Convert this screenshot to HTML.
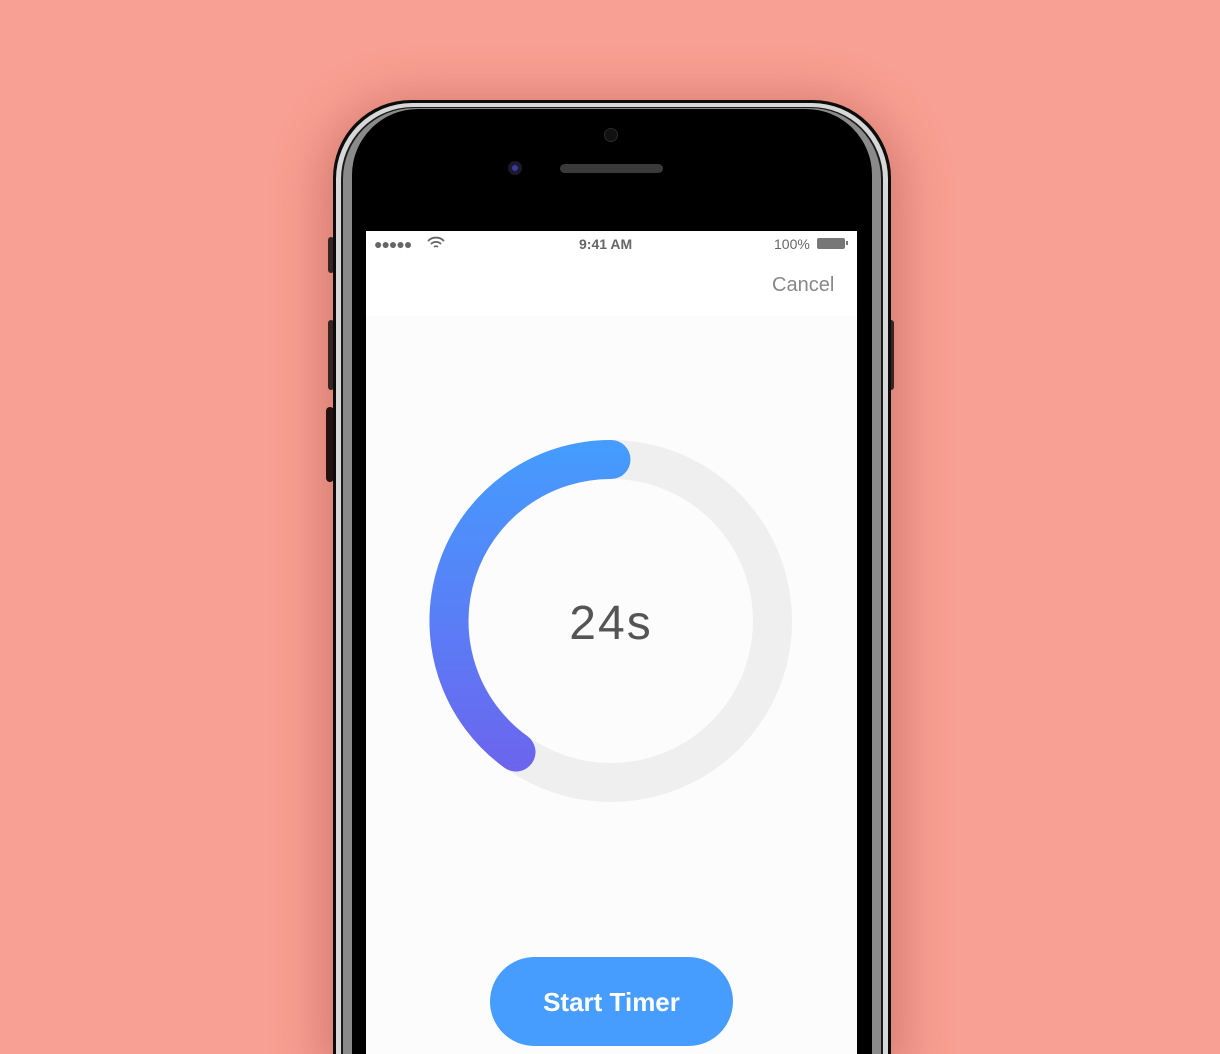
<!DOCTYPE html>
<html><head><style>
html,body{margin:0;padding:0;width:1220px;height:1054px;overflow:hidden}
body{background:#F8A093;font-family:"Liberation Sans",sans-serif}
#w{position:relative;width:1220px;height:1054px;overflow:hidden}
.abs{position:absolute}
</style></head><body><div id="w">
<div class="abs" style="left:328px;top:237px;width:6px;height:36px;background:#222;border-radius:3px"></div>
<div class="abs" style="left:328px;top:320px;width:6px;height:70px;background:#222;border-radius:3px"></div>
<div class="abs" style="left:326px;top:407px;width:8px;height:75px;background:#0a0a0a;border-radius:4px"></div>
<div class="abs" style="left:887px;top:320px;width:7px;height:70px;background:#222;border-radius:3px"></div>
<div class="abs" style="left:333px;top:100px;width:558px;height:954px;border-radius:78px 78px 0 0;background:#0c0c0c;box-shadow:0 10px 50px 10px rgba(140,50,40,0.35)"></div>
<div class="abs" style="left:336px;top:103px;width:552px;height:951px;border-radius:76px 76px 0 0;background:#d8d8d8"></div>
<div class="abs" style="left:341px;top:107px;width:542px;height:947px;border-radius:72px 72px 0 0;background:#1a1a1a"></div>
<div class="abs" style="left:343px;top:108px;width:538px;height:946px;border-radius:71px 71px 0 0;background:#8a8a8a"></div>
<div class="abs" style="left:352px;top:109px;width:520px;height:945px;border-radius:66px 66px 0 0;background:#000"></div>
<div class="abs" style="left:604px;top:128px;width:12px;height:12px;border-radius:50%;background:#111;border:1px solid #2a2a2a"></div>
<div class="abs" style="left:508px;top:161px;width:14px;height:14px;border-radius:50%;background:#1a1a2a"></div>
<div class="abs" style="left:512px;top:165px;width:6px;height:6px;border-radius:50%;background:#3a3aa0"></div>
<div class="abs" style="left:560px;top:164px;width:103px;height:9px;border-radius:5px;background:#3a3a3a"></div>
<div class="abs" style="left:366px;top:231px;width:491px;height:823px;background:#fcfcfc"></div>
<div class="abs" style="left:366px;top:231px;width:491px;height:85px;background:#fff"></div>
<div class="abs" style="left:374px;top:236px;font-size:14px;color:#666;letter-spacing:-1px">●●●●●</div>
<svg class="abs" style="left:427px;top:236px" width="18" height="14" viewBox="0 0 18 14"><path d="M1 5a11 11 0 0 1 16 0M4 8a7 7 0 0 1 10 0M7 11a3 3 0 0 1 4 0" stroke="#666" stroke-width="1.8" fill="none"/></svg>
<div class="abs" style="left:579px;top:236px;font-size:14px;font-weight:bold;color:#666">9:41 AM</div>
<div class="abs" style="left:774px;top:236px;font-size:14px;color:#666">100%</div>
<div class="abs" style="left:817px;top:238px;width:28px;height:11px;border:1px solid #777;border-radius:2px;background:#777;box-sizing:border-box"></div>
<div class="abs" style="left:846px;top:241px;width:2px;height:4px;background:#777"></div>
<div class="abs" style="left:772px;top:274px;font-size:20px;color:#888">Cancel</div>
<svg class="abs" style="left:0;top:0" width="1220" height="1054">
<defs><linearGradient id="g" x1="0" y1="440" x2="0" y2="770" gradientUnits="userSpaceOnUse"><stop offset="0" stop-color="#449DFF"/><stop offset="1" stop-color="#6C64EE"/></linearGradient></defs>
<circle cx="611" cy="621" r="161.5" stroke="#efefef" stroke-width="39" fill="none"/>
<path d="M611 459.5 A161.5 161.5 0 0 0 516 752" stroke="url(#g)" stroke-width="39" fill="none" stroke-linecap="round"/>
<text x="611" y="639" text-anchor="middle" font-family="Liberation Sans" font-size="48" fill="#555" letter-spacing="2">24s</text>
</svg>
<div class="abs" style="left:490px;top:957px;width:243px;height:89px;border-radius:45px;background:#469DFE;color:#fff;font-size:26px;font-weight:bold;text-align:center;line-height:91px">Start Timer</div>
</div></body></html>
